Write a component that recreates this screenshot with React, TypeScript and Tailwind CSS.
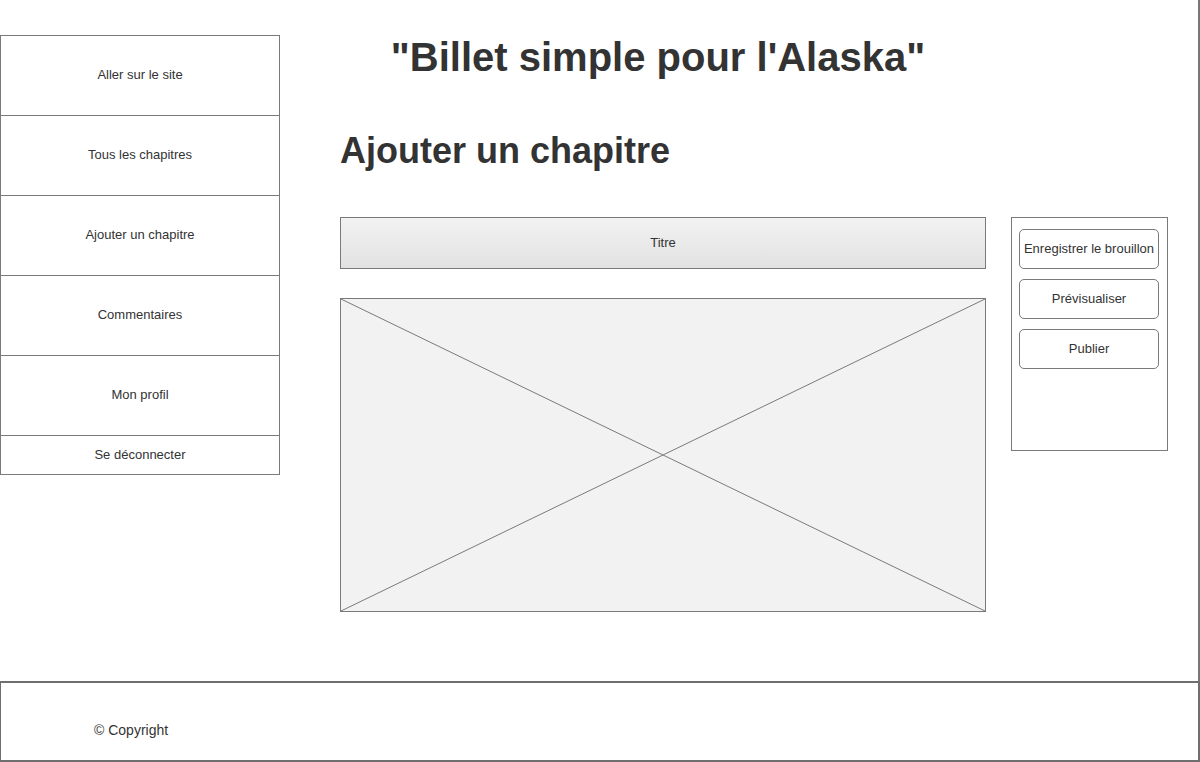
import React from "react";

const navItems = [
  "Aller sur le site",
  "Tous les chapitres",
  "Ajouter un chapitre",
  "Commentaires",
  "Mon profil",
];

export default function App() {
  return (
    <div
      className="w-[1200px] h-[762px] bg-white text-[#333333] flex flex-col overflow-hidden"
      style={{ fontFamily: '"Liberation Sans", Arial, sans-serif' }}
    >
      <div className="flex h-[681px] border-r-2 border-[#777777]">
        <aside className="w-[280px] mt-[35px] flex flex-col self-start">
          {navItems.map((item, i) => (
            <div
              key={item}
              className={`flex items-center justify-center pb-[2px] text-[13px] border-x border-b border-[#7a7a7a] ${i === 0 ? "border-t h-[81px]" : "h-[80px]"}`}
            >
              {item}
            </div>
          ))}
          <div className="h-[39px] flex items-center justify-center text-[13px] border-x border-b border-[#7a7a7a]">
            Se déconnecter
          </div>
        </aside>
        <main className="ml-[60px] w-[646px] flex flex-col">
          <h1 className="mt-[33px] pr-[10px] text-center text-[40px] leading-[48px] font-bold">
            "Billet simple pour l'Alaska"
          </h1>
          <h2 className="mt-[48px] text-[36px] leading-[44px] font-bold">Ajouter un chapitre</h2>
          <div className="mt-[44px] h-[52px] flex items-center justify-center text-[13px] border border-[#7a7a7a] bg-gradient-to-b from-[#f2f2f2] to-[#e2e2e2]">
            Titre
          </div>
          <div className="mt-[29px] h-[314px] border border-[#7a7a7a] bg-[#f2f2f2]">
            <svg width="100%" height="100%" viewBox="0 0 100 100" preserveAspectRatio="none" className="block">
              <line x1="0" y1="0" x2="100" y2="100" stroke="#7a7a7a" strokeWidth="1" vectorEffect="non-scaling-stroke" />
              <line x1="100" y1="0" x2="0" y2="100" stroke="#7a7a7a" strokeWidth="1" vectorEffect="non-scaling-stroke" />
            </svg>
          </div>
        </main>
        <div className="ml-[25px] mt-[217px] w-[157px] h-[234px] self-start border border-[#7a7a7a] flex flex-col gap-[10px] pl-[7px] pr-[8px] pt-[11px]">
          {["Enregistrer le brouillon", "Prévisualiser", "Publier"].map((b) => (
            <div
              key={b}
              className="h-[40px] rounded-[5px] border border-[#7a7a7a] flex items-center justify-center text-[13px] whitespace-nowrap"
            >
              {b}
            </div>
          ))}
        </div>
      </div>
      <footer className="h-[81px] border-2 border-[#6f6f6f] border-l border-t-2 flex items-center pl-[93px] pt-[18px] text-[14px]">
        © Copyright
      </footer>
    </div>
  );
}
